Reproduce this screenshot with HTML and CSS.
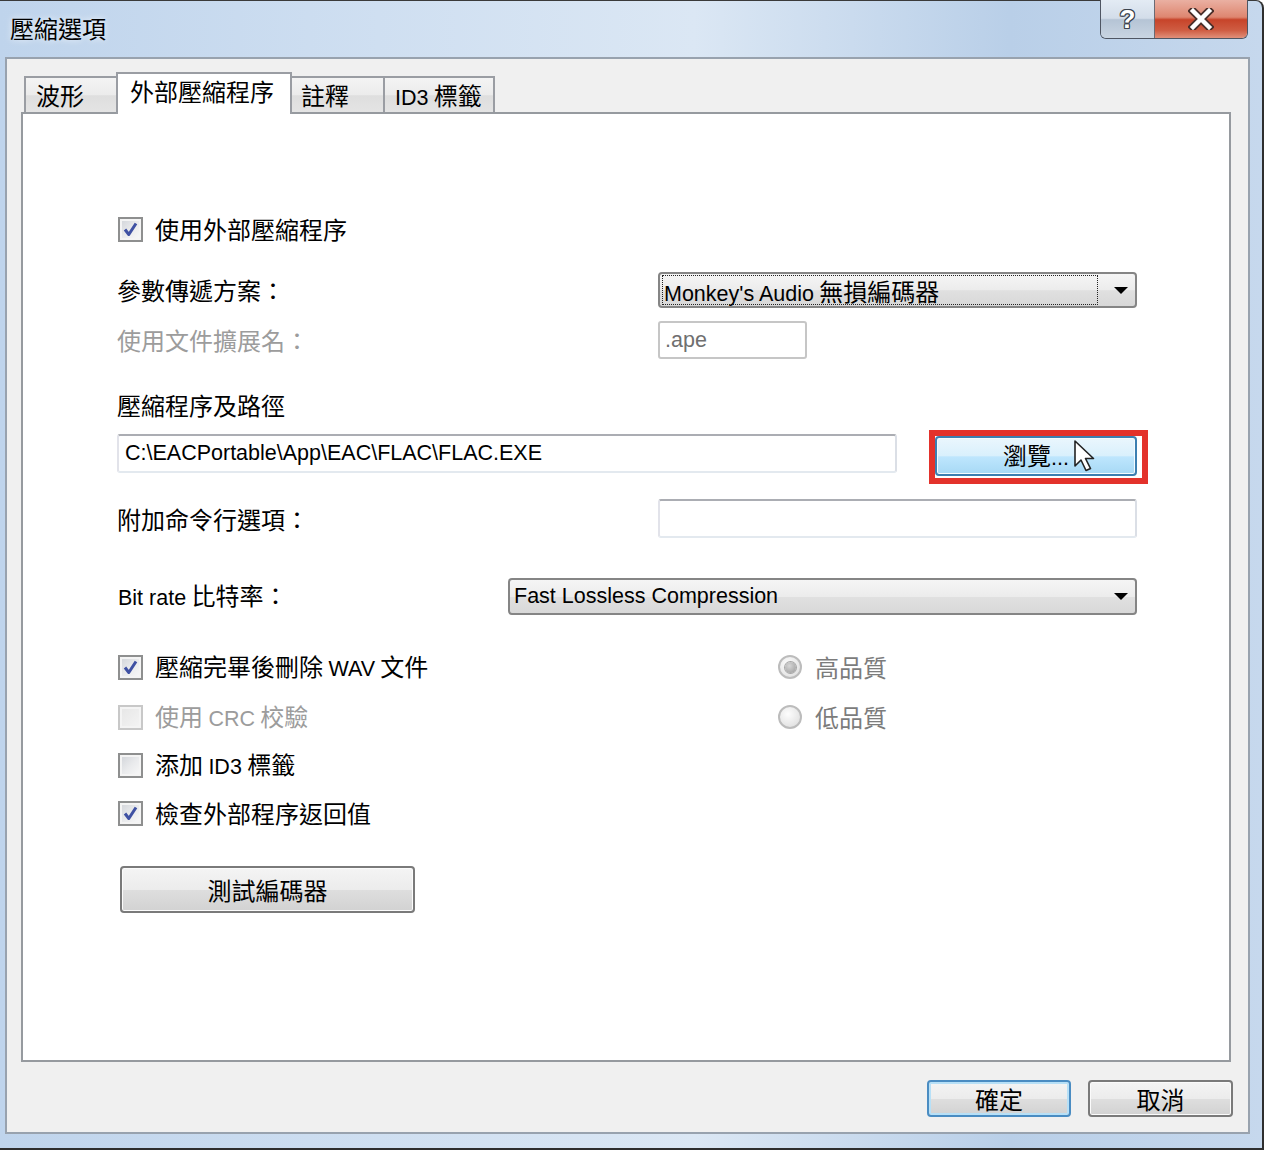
FILE: index.html
```html
<!DOCTYPE html>
<html lang="zh-Hant">
<head>
<meta charset="utf-8">
<title>壓縮選項</title>
<link rel="stylesheet" href="styles.css">
</head>
<body>
<div class="window">
  <div class="titlebar">
    <div class="title">壓縮選項</div>
    <div class="caption-btns">
      <div class="cap-help">?</div>
      <div class="cap-close">
        <svg width="26" height="22" viewBox="0 0 26 22">
          <path d="M5 3 L21 19 M21 3 L5 19" stroke="#4a2f2a" stroke-width="8" stroke-linecap="square" fill="none"/>
          <path d="M5 3 L21 19 M21 3 L5 19" stroke="#ffffff" stroke-width="4.5" stroke-linecap="square" fill="none"/>
        </svg>
      </div>
    </div>
  </div>

  <div class="client">
    <div class="tabs">
      <div class="tab t1">波形</div>
      <div class="tab t2 active">外部壓縮程序</div>
      <div class="tab t3">註釋</div>
      <div class="tab t4"><span class="en">ID3</span> 標籤</div>
    </div>

    <div class="panel">
      <div class="row row-use">
        <span class="cb checked"><svg width="21" height="21" viewBox="0 0 21 21"><path d="M5 10.5 L8.8 15.5 L16 4.5" stroke="#3f51a3" stroke-width="3" fill="none" stroke-linejoin="round"/></svg></span>
        <span class="lbl">使用外部壓縮程序</span>
      </div>

      <div class="row grid2 row-scheme">
        <span class="lbl">參數傳遞方案：</span>
        <div class="combo combo-scheme">
          <div class="combo-value focus"><span class="val"><span class="en">Monkey's Audio</span> 無損編碼器</span></div>
          <div class="combo-arrow"><span class="tri"></span></div>
        </div>
      </div>

      <div class="row grid2 row-ext">
        <span class="lbl disabled">使用文件擴展名：</span>
        <div class="textbox textbox-ext"><span class="en">.ape</span></div>
      </div>

      <div class="row row-pathlbl">
        <span class="lbl">壓縮程序及路徑</span>
      </div>

      <div class="row row-path">
        <div class="textbox textbox-path"><span class="en">C:\EACPortable\App\EAC\FLAC\FLAC.EXE</span></div>
        <div class="browse-wrap">
          <button class="btn btn-hover btn-browse"><span class="val">瀏覽<span class="en">...</span></span></button>
          <svg class="cursor" width="26" height="34" viewBox="0 0 26 34"><path d="M2 2 L2 27 L8 21 L13 31.5 L17.5 29.5 L12.5 19.5 L20.5 19.5 Z" fill="#ffffff" stroke="#222" stroke-width="1.6" stroke-linejoin="round"/></svg>
        </div>
      </div>

      <div class="row grid2 row-cmd">
        <span class="lbl">附加命令行選項：</span>
        <div class="textbox textbox-cmd"></div>
      </div>

      <div class="row row-bitrate">
        <span class="lbl"><span class="en">Bit rate</span> 比特率：</span>
        <div class="combo combo-bitrate">
          <div class="combo-value"><span class="en">Fast Lossless Compression</span></div>
          <div class="combo-arrow"><span class="tri"></span></div>
        </div>
      </div>

      <div class="row grid3 row-del">
        <div class="opt">
          <span class="cb checked"><svg width="21" height="21" viewBox="0 0 21 21"><path d="M5 10.5 L8.8 15.5 L16 4.5" stroke="#3f51a3" stroke-width="3" fill="none" stroke-linejoin="round"/></svg></span>
          <span class="lbl">壓縮完畢後刪除 <span class="en">WAV</span> 文件</span>
        </div>
        <div class="opt">
          <span class="radio on"></span>
          <span class="lbl radio-lbl">高品質</span>
        </div>
      </div>

      <div class="row grid3 row-crc">
        <div class="opt">
          <span class="cb dis"></span>
          <span class="lbl disabled">使用 <span class="en">CRC</span> 校驗</span>
        </div>
        <div class="opt">
          <span class="radio"></span>
          <span class="lbl radio-lbl">低品質</span>
        </div>
      </div>

      <div class="row row-id3">
        <span class="cb"></span>
        <span class="lbl">添加 <span class="en">ID3</span> 標籤</span>
      </div>

      <div class="row row-check">
        <span class="cb checked"><svg width="21" height="21" viewBox="0 0 21 21"><path d="M5 10.5 L8.8 15.5 L16 4.5" stroke="#3f51a3" stroke-width="3" fill="none" stroke-linejoin="round"/></svg></span>
        <span class="lbl">檢查外部程序返回值</span>
      </div>

      <div class="row row-test">
        <button class="btn btn-test">測試編碼器</button>
      </div>
    </div>

    <div class="footer">
      <button class="btn btn-default btn-foot">確定</button>
      <button class="btn btn-foot">取消</button>
    </div>
  </div>
</div>
</body>
</html>
```

FILE: styles.css
```css
* { box-sizing: border-box; margin: 0; padding: 0; }

html, body { background: #ffffff; }

body {
  margin: 0;
  font-family: "Noto Sans CJK TC", "Liberation Sans", sans-serif;
  font-size: 24px;
  color: #000;
}

.en {
  font-family: "Liberation Sans", "Noto Sans CJK TC", sans-serif;
  font-size: 21.5px;
}

.val { white-space: nowrap; }

/* ---------- window frame ---------- */
.window {
  width: 1264px;
  height: 1150px;
  border-top: 1px solid #3a3a3a;
  border-right: 2px solid #2e2e2e;
  border-bottom: 2px solid #2e2e2e;
  border-top-right-radius: 8px;
  background: linear-gradient(90deg, #bfd4ec 0%, #cfdff1 30%, #dbe7f4 55%, #b9cfe8 80%, #c6d8ed 100%);
  padding: 0 12px 14px 5px;
  display: flex;
  flex-direction: column;
}

.titlebar {
  height: 56px;
  display: flex;
  justify-content: space-between;
  align-items: flex-start;
  flex: none;
}

.title {
  margin-left: 5px;
  margin-top: 15px;
  line-height: 24px;
  text-shadow: 0 0 6px rgba(255,255,255,0.9);
}

.caption-btns {
  display: flex;
  margin-top: -1px;
  margin-right: 2px;
  height: 39px;
  border: 1px solid #4f5663;
  border-top: none;
  border-radius: 0 0 6px 6px;
  overflow: hidden;
}

.cap-help {
  width: 54px;
  display: flex;
  justify-content: center;
  align-items: center;
  background: linear-gradient(#e3ebf4 0%, #d3dde9 48%, #b5c4d5 52%, #c9d5e2 100%);
  border-right: 1px solid #6a6a74;
  font-family: "Liberation Sans", sans-serif;
  font-weight: bold;
  font-size: 26px;
  color: #fff;
  text-shadow: 1px 0 0 #3b434e, -1px 0 0 #3b434e, 0 1px 0 #3b434e, 0 -1px 0 #3b434e,
               1px 1px 0 #3b434e, -1px -1px 0 #3b434e, 1px -1px 0 #3b434e, -1px 1px 0 #3b434e;
}

.cap-close {
  width: 92px;
  display: flex;
  justify-content: center;
  align-items: center;
  background: linear-gradient(#eab0a2 0%, #de8670 45%, #c7442a 52%, #cf5d43 80%, #e1907a 100%);
}

/* ---------- client area ---------- */
.client {
  flex: 1;
  border: 2px solid #98a2ae;
  background: #f0f0f0;
  padding: 13px 17px 0 14px;
  display: flex;
  flex-direction: column;
}

.tabs {
  display: flex;
  align-items: flex-end;
  height: 42px;
  padding-left: 3px;
  margin-bottom: -2px;
  position: relative;
  z-index: 1;
}

.tab {
  height: 36px;
  margin-bottom: 2px;
  margin-left: -2px;
  border: 2px solid #9a9da3;
  border-bottom: none;
  background: linear-gradient(#f4f4f4 0%, #ebebeb 50%, #dedede 52%, #e4e4e4 100%);
  padding-left: 10px;
  line-height: 34px;
  white-space: nowrap;
}

.tab.t1 { width: 94px; margin-left: 0; }
.tab.t2 { width: 176px; }
.tab.t3 { width: 95px; padding-left: 9px; }
.tab.t4 { width: 112px; }

.tab.active {
  height: 42px;
  margin-bottom: 0;
  background: #fff;
  position: relative;
  z-index: 2;
  padding-left: 12px;
}

.panel {
  height: 950px;
  border: 2px solid #969a9f;
  background: #fff;
  padding: 97px 92px 0 94px;
  display: flex;
  flex-direction: column;
  flex: none;
}

.row { display: flex; align-items: center; }
.grid2 { display: grid; grid-template-columns: 541px 1fr; align-items: center; }
.grid3 { display: grid; grid-template-columns: 661px 1fr; align-items: center; }
.opt { display: flex; align-items: center; }

.lbl { line-height: 1; white-space: nowrap; }
.cb + .lbl { margin-left: 12px; }
.disabled { color: #9c9c9c; }
.radio-lbl { color: #7c7c7c; margin-left: 13px; }

.row-use { height: 36px; }
.row-scheme { height: 36px; margin-top: 25px; }
.row-ext { height: 38px; margin-top: 13px; }
.row-pathlbl { height: 30px; margin-top: 31px; }
.row-path { height: 54px; margin-top: 9px; }
.row-cmd { height: 39px; margin-top: 16px; }
.row-bitrate { height: 37px; margin-top: 40px; justify-content: space-between; padding-left: 1px; }
.row-del { height: 30px; margin-top: 37px; }
.row-crc { height: 30px; margin-top: 20px; }
.row-id3 { height: 30px; margin-top: 18px; }
.row-check { height: 30px; margin-top: 18px; }
.row-test { height: 47px; margin-top: 38px; }

/* ---------- checkbox / radio ---------- */
.cb {
  width: 25px;
  height: 25px;
  flex: none;
  margin-left: 1px;
  border: 2px solid #8e8f8f;
  background: linear-gradient(135deg, #d0d3d8 0%, #e9eaec 50%, #f9f9f9 100%);
  box-shadow: inset 0 0 0 2px #f4f4f4;
  display: flex;
  align-items: center;
  justify-content: center;
}

.cb.dis {
  border-color: #c8c8c8;
  background: linear-gradient(135deg, #e6e6e6 0%, #f4f4f4 100%);
}

.radio {
  width: 24px;
  height: 24px;
  flex: none;
  border-radius: 50%;
  border: 2px solid #bcbcbc;
  background: radial-gradient(circle at 40% 35%, #fdfdfd 0%, #e8e8e8 60%, #d8d8d8 100%);
  display: flex;
  align-items: center;
  justify-content: center;
}

.radio.on::after {
  content: "";
  width: 11px;
  height: 11px;
  border-radius: 50%;
  background: radial-gradient(circle at 40% 35%, #d6d6d6 0%, #9a9a9a 100%);
  box-shadow: 0 0 0 1px #a6a6a6;
}

/* ---------- combo ---------- */
.combo {
  height: 36px;
  border: 2px solid #858585;
  border-radius: 4px;
  background: linear-gradient(#f5f5f5 0%, #ececec 50%, #e0e0e0 52%, #d8d8d8 100%);
  display: flex;
  align-items: stretch;
}

.combo-scheme { width: 479px; }
.combo-bitrate { width: 629px; height: 37px; }

.combo-value {
  flex: 1;
  display: flex;
  align-items: center;
  white-space: nowrap;
  padding-left: 4px;
}

.combo-value.focus {
  margin: 1px 0 1px 2px;
  border: 1px dotted #222;
  padding-left: 1px;
}

.combo-arrow {
  width: 37px;
  display: flex;
  align-items: center;
  justify-content: flex-end;
  padding-right: 7px;
}

.tri {
  width: 0;
  height: 0;
  border-left: 7px solid transparent;
  border-right: 7px solid transparent;
  border-top: 7px solid #000;
}

/* ---------- textbox ---------- */
.textbox {
  height: 39px;
  border: 2px solid;
  border-color: #abadb3 #dbdfe6 #e3e9ef #e2e3ea;
  border-radius: 3px;
  background: #fff;
  display: flex;
  align-items: center;
  padding-left: 6px;
  white-space: nowrap;
}

.textbox-ext {
  width: 149px;
  height: 38px;
  border-color: #c6c6c6;
  color: #6f6f6f;
  padding-left: 5px;
}

.textbox-path { width: 780px; margin-bottom: 5px; }
.textbox-cmd { width: 479px; }

/* ---------- buttons ---------- */
.btn {
  font-family: inherit;
  font-size: 24px;
  color: #000;
  border: 2px solid #7a7a7a;
  border-radius: 4px;
  background: linear-gradient(#f4f4f4 0%, #ececec 50%, #dedede 52%, #d2d2d2 100%);
  box-shadow: inset 0 0 0 1px #fbfbfb;
  display: flex;
  align-items: center;
  justify-content: center;
  line-height: 1;
  white-space: nowrap;
}

.btn-hover {
  border-color: #3c7fb1;
  background: linear-gradient(#eaf6fd 0%, #d9f0fc 50%, #bee6fd 52%, #a7d9f5 100%);
  box-shadow: inset 0 0 0 1px #f4fbff;
}

.browse-wrap {
  position: relative;
  margin-left: 38px;
  width: 202px;
  height: 40px;
}

.browse-wrap::after {
  content: "";
  position: absolute;
  left: -6px;
  top: -6px;
  right: -11px;
  bottom: -8px;
  border: 6px solid #e3322b;
  pointer-events: none;
}

.btn-browse { width: 202px; height: 40px; }

.cursor {
  position: absolute;
  left: 138px;
  top: 3px;
}

.btn-test {
  width: 295px;
  height: 47px;
  margin-left: 3px;
}

.footer {
  display: flex;
  justify-content: flex-end;
  gap: 17px;
  margin-top: 18px;
  margin-right: -2px;
}

.btn-foot { width: 145px; height: 37px; }

.btn-default {
  width: 144px;
  border-color: #4a8cc2;
  box-shadow: inset 0 0 0 2px #b7e0f7;
}
```
